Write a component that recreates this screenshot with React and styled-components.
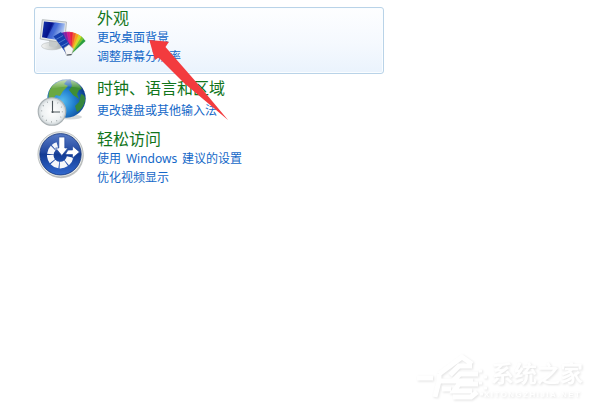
import React from 'react';
import styled, { createGlobalStyle } from 'styled-components';

const GlobalStyle = createGlobalStyle`
  body { margin: 0; background: #fff; overflow: hidden; }
`;

const Page = styled.main`
  position: relative;
  box-sizing: border-box;
  width: 592px;
  height: 408px;
  padding: 7px 0 0 34px;
  overflow: hidden;
  background: #fff;
  font-family: 'Noto Sans', 'Noto Sans CJK SC', sans-serif;
`;

const CategoryList = styled.div`
  display: flex;
  flex-direction: column;
  width: 350px;
`;

const Category = styled.section`
  box-sizing: border-box;
  display: flex;
  align-items: flex-start;
  height: ${(p) => p.$height}px;
  padding-left: 2px;
  border: 1px solid ${(p) => (p.$active ? '#b9d3e8' : 'transparent')};
  border-radius: 3px;
  background: ${(p) => (p.$active ? 'linear-gradient(#fdfeff, #f5f9fe 55%, #eaf3fd)' : 'none')};
  box-shadow: ${(p) => (p.$active ? 'inset 0 0 0 1px #fafdff' : 'none')};
`;

const IconSlot = styled.div`
  flex: none;
  width: 50px;
  height: 50px;
  margin: ${(p) => p.$top}px 10px 0 0;
  svg { display: block; overflow: visible; }
`;

const Copy = styled.div`
  display: flex;
  flex-direction: column;
  align-items: flex-start;
  white-space: nowrap;
`;

const Title = styled.h2`
  margin: ${(p) => p.$gap || 0}px 0;
  font-family: 'Noto Sans CJK SC', sans-serif;
  font-size: 16px;
  font-weight: 400;
  line-height: 19px;
  color: #12751b;
`;

const TaskLink = styled.a`
  height: 19px;
  font-family: 'Noto Sans CJK SC', sans-serif;
  font-size: 12px;
  line-height: 19px;
  color: #1468c8;
`;

const Latin = styled.span`
  display: inline-block;
  width: 61px;
  text-align: center;
  font-family: 'Noto Sans', sans-serif;
  font-size: 12px;
`;

const Pointer = styled.svg`
  position: absolute;
  left: 145px;
  top: 36px;
`;

const Watermark = styled.div`
  position: absolute;
  left: 417px;
  top: 352px;
  display: flex;
  color: #fff;
  filter: drop-shadow(1px 1px 0.8px #e2e2e2);
`;

const WatermarkText = styled.div`
  display: flex;
  flex-direction: column;
  margin-top: 6px;
  white-space: nowrap;
`;

const WatermarkName = styled.span`
  font: 700 23px/29px 'Noto Sans CJK SC', sans-serif;
`;

const WatermarkSite = styled.span`
  margin: 3px 0 0 -7px;
  font: 700 8px/9px 'Liberation Sans', sans-serif;
  letter-spacing: 1.45px;
`;

const FAN = ['#1d48c4', '#4b2ab0', '#8a1f9f', '#d11a88', '#e8203f', '#f0602a', '#f5a31b', '#d9d722', '#7cc62a', '#2a9e3f'];

function AppearanceIcon() {
  return (
    <svg width="50" height="50" viewBox="0 0 50 50">
      <defs>
        <linearGradient id="screen" x2="1" y2=".35">
          <stop offset="0" stopColor="#1738ae" /><stop offset=".42" stopColor="#04128a" />
          <stop offset=".58" stopColor="#3a62d2" /><stop offset="1" stopColor="#b5cdf4" />
        </linearGradient>
        <linearGradient id="stand" x2="1"><stop stopColor="#f4f5f4" /><stop offset="1" stopColor="#a7adad" /></linearGradient>
      </defs>
      <ellipse cx="15" cy="36" rx="10.500" ry="3.800" fill="url(#stand)" stroke="#b9bebe" strokeWidth=".6" />
      <path d="M12 29l9 2-1 5q-4 2-8 0z" fill="#c5caca" />
      <path d="M5.300 9.700L29.500 12 27.500 33 3.200 29z" fill="#e4e7e6" stroke="#a9afb0" strokeWidth=".8" />
      <path d="M7 11.500L28 13.500 26 31 5 27.300z" fill="url(#screen)" />
      <path d="M18 12.500l4 .4-9 15.700-3-.5z" fill="#4a70dc" opacity=".65" />
      {FAN.map((color, i) => (
        <path
          key={color}
          transform={`rotate(${-30 + i * 8.500} 31 43)`}
          d="M28 22h6.500L34 43h-5z"
          fill={color}
          stroke="#fff"
          strokeOpacity=".25"
          strokeWidth=".3"
        />
      )).reverse()}
      <path d="M16.500 26.500l7.500-4.500L35 38l-6.500 4z" fill="#153fae" />
      <path d="M19 29.500l7-4M21.500 33l7-4M24 36.500l7-4M26 39.500l7-4" stroke="#5a85d8" strokeWidth=".8" />
      <path d="M27 38l5-3.500 4.500 4.500-2 6-5 .5z" fill="#f5f5f5" stroke="#9299a0" strokeWidth=".6" />
      <path d="M30 45l4.500-.5" fill="none" stroke="#444b54" strokeWidth="1.1" />
    </svg>
  );
}

function ClockGlobeIcon() {
  return (
    <svg width="50" height="50" viewBox="0 0 50 50">
      <defs>
        <radialGradient id="ocean" cx=".38" cy=".58" r=".66">
          <stop stopColor="#58bef0" /><stop offset=".48" stopColor="#2180d0" /><stop offset="1" stopColor="#0a3786" />
        </radialGradient>
        <radialGradient id="dial"><stop stopColor="#fff" /><stop offset=".75" stopColor="#edf1f2" /><stop offset="1" stopColor="#c8cfd2" /></radialGradient>
        <linearGradient id="shine" x2="0" y2="1"><stop stopColor="#fff" stopOpacity=".7" /><stop offset="1" stopColor="#fff" stopOpacity="0" /></linearGradient>
      </defs>
      <ellipse cx="33" cy="40" rx="12" ry="2.500" fill="#b5b9ba" opacity=".55" />
      <circle cx="29.500" cy="21.500" r="19.200" fill="url(#ocean)" />
      <path d="M15 9q6-6 15-6l-3 4 4 2-5 5-3 5-4-1-4 5-2 3q-4-9 2-17z" fill="#6aa843" />
      <path d="M34 3q8 3 11 9l-3 1-2 4 2 5-6-4-4-5 3-4-1-4z" fill="#3f8e34" />
      <path d="M44 17q5 1 4 7-2 8-8 11l-2-6 4-4z" fill="#35863e" />
      <path d="M14 12q5-12 17-10 11 1 15 10-14-5-32 0z" fill="url(#shine)" />
      <circle cx="15" cy="34.500" r="13.800" fill="url(#dial)" stroke="#a9b0b3" strokeWidth="1.1" />
      <circle cx="15" cy="34.500" r="10.400" fill="none" stroke="#8b9396" strokeWidth="1.1" strokeDasharray=".8 4.645" />
      <path d="M15.500 24v11H23" fill="none" stroke="#4d565b" strokeWidth="1.1" />
      <circle cx="15.500" cy="35" r="1.1" fill="#4d565b" />
    </svg>
  );
}

function EaseIcon() {
  return (
    <svg width="50" height="50" viewBox="0 0 50 50">
      <defs>
        <linearGradient id="ease" x2="0" y2="1"><stop stopColor="#587bc6" /><stop offset=".45" stopColor="#20479f" /><stop offset=".5" stopColor="#123b94" /><stop offset="1" stopColor="#3269ce" /></linearGradient>
      </defs>
      <circle cx="24.200" cy="25.700" r="22.500" fill="#9b9f9e" opacity=".6" />
      <circle cx="23.500" cy="24.300" r="22.600" fill="#e7eae9" stroke="#a9aead" strokeWidth=".7" />
      <circle cx="23.500" cy="24.300" r="20.700" fill="url(#ease)" stroke="#153578" strokeWidth=".8" />
      <path d="M33.100 27A10 10 0 1 1 20.500 15.500" fill="none" stroke="#f5f7fa" strokeWidth="6.600" strokeDasharray="6.700 .9" />
      <path d="M21.800 7h6v11h3.200l-6.200 7.500-6.200-7.500h3.200z" fill="#fff" stroke="#244b9d" strokeWidth=".7" />
      <path d="M28.500 24l2.500-4h4.500v-4l7 6-7 6v-3.500h-5.500z" fill="#fff" stroke="#244b9d" strokeWidth=".7" />
    </svg>
  );
}

function WatermarkHouse() {
  return (
    <svg width="74" height="48" viewBox="0 0 74 48" fill="none" stroke="currentColor" strokeWidth="5">
      <path d="M0 26h16M22 22L45 5l10 7M22 22v7M18 45l4-16h13M25 37h9M55 14H42L33 23M61 22H43l-7 7h20M61 32H42l-5 7h18M36 45h18l6-5" />
      <path d="M62 19h3M67 25h3M62 31h3M67 36h3M63 42h3" strokeWidth="3" />
    </svg>
  );
}

export default function App() {
  return (
    <>
      <GlobalStyle />
      <Page>
        <CategoryList>
          <Category $active $height={67}>
            <IconSlot $top={2}><AppearanceIcon /></IconSlot>
            <Copy>
              <Title>外观</Title>
              <TaskLink>更改桌面背景</TaskLink>
              <TaskLink>调整屏幕分辨率</TaskLink>
            </Copy>
          </Category>
          <Category $height={54}>
            <IconSlot $top={2}><ClockGlobeIcon /></IconSlot>
            <Copy>
              <Title $gap={3}>时钟、语言和区域</Title>
              <TaskLink>更改键盘或其他输入法</TaskLink>
            </Copy>
          </Category>
          <Category $height={62}>
            <IconSlot $top={1}><EaseIcon /></IconSlot>
            <Copy>
              <Title>轻松访问</Title>
              <TaskLink>使用<Latin>Windows</Latin>建议的设置</TaskLink>
              <TaskLink>优化视频显示</TaskLink>
            </Copy>
          </Category>
        </CategoryList>
        <Pointer width="86" height="87" viewBox="0 0 86 87">
          <path d="M4.300 4L24 5.700 20.500 11 52 47 83 84 39 47 13.500 21.500 10 24z" fill="#f33b3e" />
        </Pointer>
        <Watermark>
          <WatermarkHouse />
          <WatermarkText>
            <WatermarkName>系统之家</WatermarkName>
            <WatermarkSite>XITONGZHIJIA.NET</WatermarkSite>
          </WatermarkText>
        </Watermark>
      </Page>
    </>
  );
}
